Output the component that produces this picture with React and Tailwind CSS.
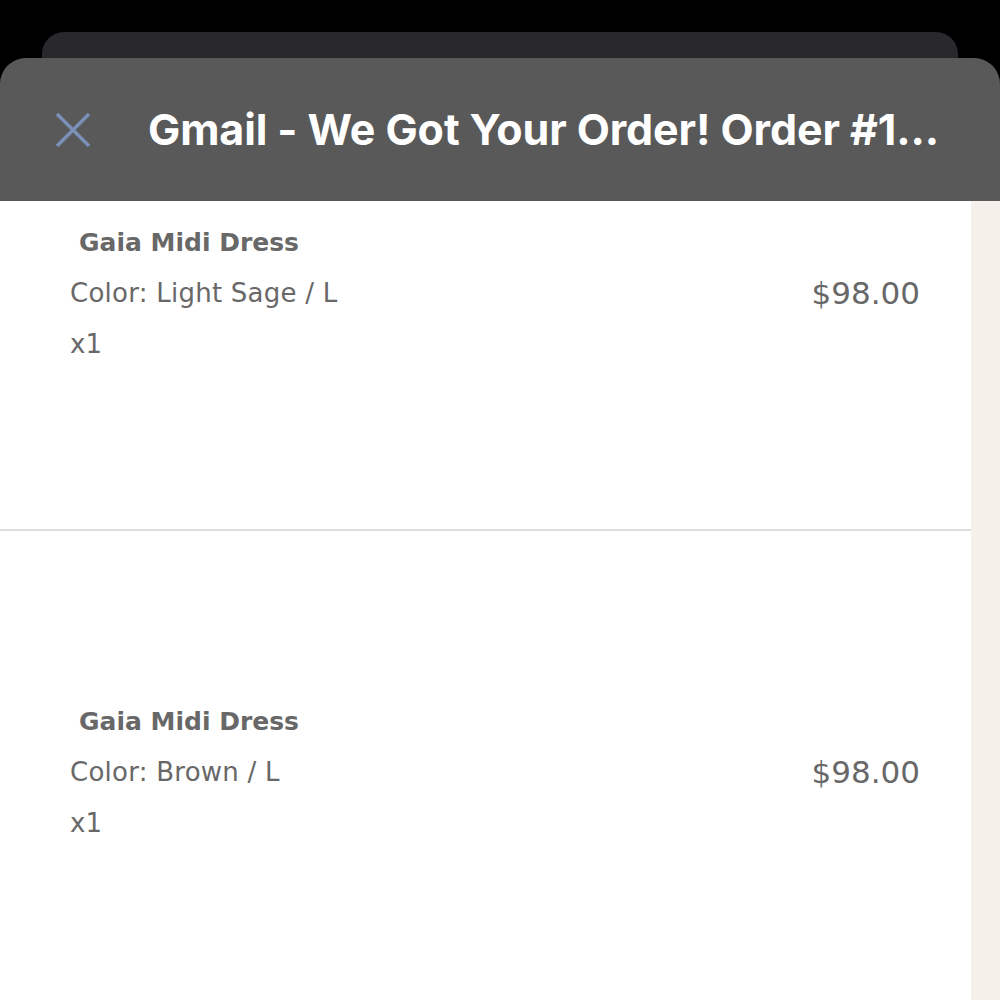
import React from 'react';

const items = [
  { name: 'Gaia Midi Dress', color: 'Light Sage / L', qty: 'x1', price: '$98.00' },
  { name: 'Gaia Midi Dress', color: 'Brown / L', qty: 'x1', price: '$98.00' },
];

const OrderItem = ({ item }) => (
  <div className="flex justify-between text-[#686868]" style={{ fontFamily: '"DejaVu Sans", Verdana, sans-serif' }}>
    <div className="flex flex-col">
      <div className="h-[51px] leading-[51px] pl-[79px] text-[25px] font-bold">{item.name}</div>
      <div className="h-[51px] leading-[51px] pl-[70px] text-[26px] tracking-[0.25px]">Color: {item.color}</div>
      <div className="h-[51px] leading-[51px] pl-[70px] text-[26px]">{item.qty}</div>
    </div>
    <div className="mt-[51px] h-[51px] leading-[51px] pr-[51px] text-[31px]">{item.price}</div>
  </div>
);

const App = () => {
  return (
    <div className="w-[1000px] h-[1000px] bg-black overflow-hidden flex flex-col">
      {/* stacked sheets */}
      <div className="pt-[32px] px-[42px]">
        <div className="h-[26px] bg-[#29282d] rounded-t-[22px]" />
      </div>
      <div className="h-[143px] bg-[#595959] rounded-t-[26px] flex items-center pl-[55px]">
        <svg width="36" height="36" viewBox="0 0 36 36" className="shrink-0">
          <path d="M2 2 L34 34 M34 2 L2 34" stroke="#7a90b8" strokeWidth="3.5" strokeLinecap="butt" />
        </svg>
        <div
          className="ml-[57px] text-white text-[43px] font-bold tracking-[-0.1px] whitespace-nowrap"
          style={{ fontFamily: 'Inter, "Open Sans", sans-serif' }}
        >
          Gmail - We Got Your Order! Order #1...
        </div>
      </div>
      <div className="flex-1 flex bg-white">
        <div className="w-[971px] flex flex-col pt-[16px]">
          <OrderItem item={items[0]} />
          <div className="mt-[159px] h-[2px] bg-[#dddddd]" />
          <div className="mt-[165px]">
            <OrderItem item={items[1]} />
          </div>
        </div>
        <div className="flex-1 bg-[#f5f0ea]" />
      </div>
    </div>
  );
};

export default App;
